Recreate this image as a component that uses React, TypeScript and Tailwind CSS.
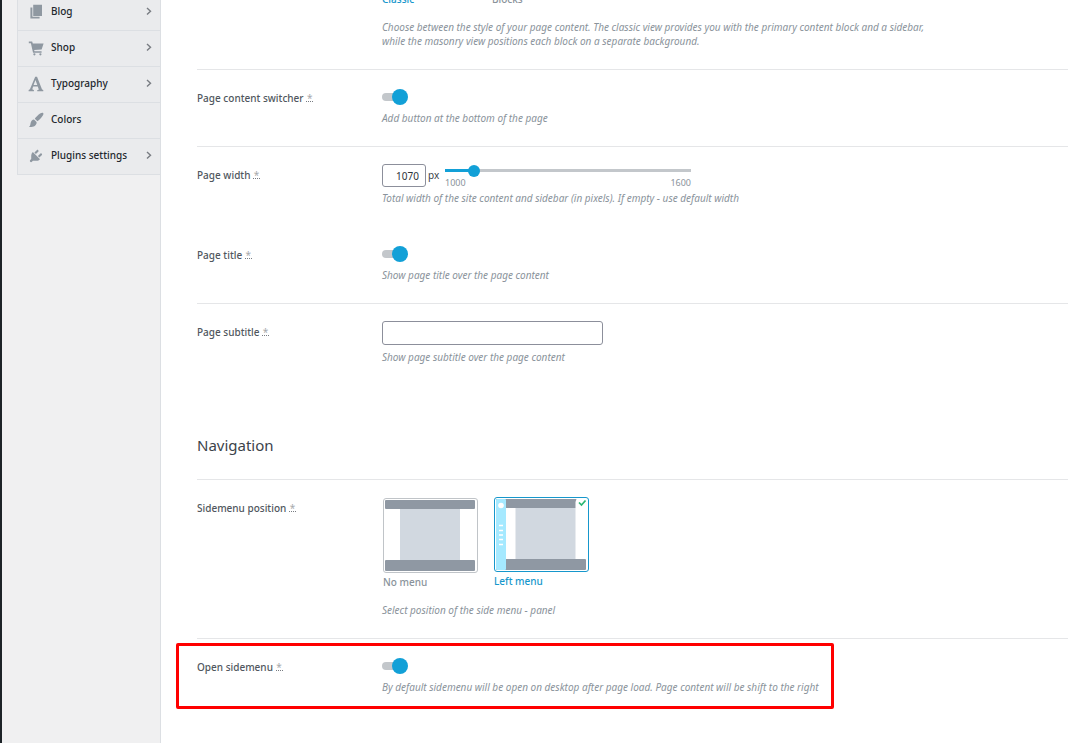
import { useState, type ReactNode } from "react";

const icons = {
  pages: "M6.500 1h11v14h-11zM3 4.500h2.500v11.500h9v2H3z",
  cart: "M1 2h4.200l.8 2.500h13.500l-2.500 7.500-9.300.5.4 1.500H17V16H6.300L3.600 4H1zM8 16.500a1.400 1.400 0 1 1 0 2.800 1.400 1.400 0 0 1 0-2.800zM15.500 16.500a1.400 1.400 0 1 1 0 2.800 1.400 1.400 0 0 1 0-2.800z",
  type: "M9 1h2.300l5.900 15c.3.900.8 1.300 1.900 1.400V19h-7.500v-1.600c1.600 0 2-.3 1.700-1.200l-1.100-3.200H6.500l-.8 2.400c-.5 1.400 0 1.900 1.700 2V19H.8v-1.600c1-.1 1.600-.7 2-1.700zM9.300 5L7 11.400h4.600z",
  brush: "M18.900 1.100c.8.800.2 2.500-.8 3.900-1.500 2.200-4.300 5.300-6.300 6.700L8.500 8.400C9.900 6.400 13 3.500 15.100 2c1.400-1 3.100-1.600 3.800-.9zM7.500 9.400l3.200 3.200c.4 1.600-.4 3.700-2.300 4.800-2 1.200-4.700 1.500-7.300 1.300 1.700-1.100 1.700-2.700 2.100-4.700.5-2.500 2.300-4.500 4.300-4.600z",
  plug: "M13.11 4.36L9.87 7.6 8 5.73l3.24-3.24c.35-.34 1.05-.2 1.56.32.52.51.66 1.21.31 1.55zm-8 1.77l.91-1.12 9.01 9.01-1.19.84c-.71.71-2.63 1.16-3.82 1.16H6.14L4.9 17.26c-.59.59-1.54.59-2.12 0-.59-.58-.59-1.53 0-2.12l1.24-1.24v-3.88c0-1.13.4-3.19 1.09-3.89zm7.26 3.97l3.24-3.24c.34-.35 1.04-.21 1.55.31.52.51.66 1.21.31 1.55l-3.24 3.25z",
};

const menu: { label: string; icon: keyof typeof icons; nested: boolean }[] = [
  { label: "Blog", icon: "pages", nested: true },
  { label: "Shop", icon: "cart", nested: true },
  { label: "Typography", icon: "type", nested: true },
  { label: "Colors", icon: "brush", nested: false },
  { label: "Plugins settings", icon: "plug", nested: true },
];

function Sidebar() {
  return (
    <aside className="w-[161px] shrink-0 border-r border-l-2 border-r-[#dcdfe3] border-l-[#1d2327] bg-[#f0f0f1] pl-[15px]">
      <nav className="-mt-[5px] border-l border-[#dcdfe3]">
        {menu.map((item) => (
          <a
            key={item.label}
            href="#"
            className="flex h-9 items-center border-b border-[#dcdfe3] bg-[#eaebed] pr-1.5 pb-[3px] pl-2.5 text-[#23282d]"
          >
            <svg viewBox="0 0 20 20" className="mt-0.5 mr-[7px] size-4 shrink-0 fill-[#8f98a1]" aria-hidden="true">
              <path d={icons[item.icon]} fillRule="evenodd" />
            </svg>
            <span className="flex-1 font-medium">{item.label}</span>
            {item.nested && (
              <svg viewBox="0 0 10 10" className="size-2.5 fill-none stroke-[#787c82]" strokeWidth="1.4" aria-hidden="true">
                <path d="M3 2l3.500 3.200L3 8.400" />
              </svg>
            )}
          </a>
        ))}
      </nav>
    </aside>
  );
}

function Row({
  label,
  htmlFor,
  note,
  divider = true,
  highlighted = false,
  children,
}: {
  label?: string;
  htmlFor?: string;
  note: ReactNode;
  divider?: boolean;
  highlighted?: boolean;
  children: ReactNode;
}) {
  return (
    <div
      className={`relative grid grid-cols-[185px_1fr] border-b pt-[17px] pb-[21px] ${divider ? "border-[#e5e6e8]" : "border-transparent"}`}
    >
      <div className="pt-1 text-[#50575e]">
        {label && (
          <>
            <label htmlFor={htmlFor} className="font-medium">
              {label}
            </label>{" "}
            <span className="inline-flex h-1.5 w-[7px] justify-center border-b border-dotted border-[#787c82] align-middle leading-[4px] text-[#a7aaad]">
              *
            </span>
          </>
        )}
      </div>
      <div>
        {children}
        <p className="mt-[5px] text-[#8a939b] italic">{note}</p>
      </div>
      {highlighted && (
        <div className="pointer-events-none absolute top-1 -left-[21px] h-[66px] w-[658px] rounded-xs border-3 border-[#ff0000]" />
      )}
    </div>
  );
}

function Switch({ id }: { id: string }) {
  return (
    <input
      id={id}
      type="checkbox"
      defaultChecked
      className="relative mt-px block h-[18px] w-[27px] appearance-none before:absolute before:top-[5px] before:left-0 before:h-2 before:w-6 before:rounded-full before:bg-[#c3c7cb] after:absolute after:top-px after:left-0 after:size-4 after:rounded-full after:bg-[#8f98a1] checked:after:left-[10px] checked:after:bg-[#12a0d7]"
    />
  );
}

function WidthField() {
  const [width, setWidth] = useState(1070);
  const filled = ((width - 1000) / 600) * 100;
  return (
    <div className="flex h-[22px] items-start">
      <input
        id="page-width"
        type="text"
        value={width}
        onChange={(e) => setWidth(Number(e.target.value) || 0)}
        className="h-[23px] w-11 rounded-[3px] border border-[#8c8f9b] bg-white pr-1.5 text-right text-[#2c3338]"
      />
      <span className="mt-1 ml-0.5 w-[17px] text-[#3c434a]">px</span>
      <div className="w-[246px]">
        <div className="relative h-3">
          <div className="absolute inset-x-0 top-[5px] h-[3px] bg-[#c3c7cb]" />
          <div className="absolute top-[5px] left-0 h-[3px] bg-[#12a0d7]" style={{ width: `${filled}%` }} />
          <input
            type="range"
            min={1000}
            max={1600}
            value={width}
            aria-label="Page width in pixels"
            onChange={(e) => setWidth(Number(e.target.value))}
            className="absolute top-0 -left-1.5 h-3.5 w-[260px] appearance-none bg-transparent [&::-webkit-slider-thumb]:size-3 [&::-webkit-slider-thumb]:appearance-none [&::-webkit-slider-thumb]:rounded-full [&::-webkit-slider-thumb]:bg-[#12a0d7]"
          />
        </div>
        <div className="flex justify-between text-[9px] text-[#8a939b]">
          <span>1000</span>
          <span>1600</span>
        </div>
      </div>
    </div>
  );
}

function LayoutDrawing({ side }: { side: boolean }) {
  return (
    <svg viewBox="0 0 91 71" className="block h-[71px] w-[91px]" aria-hidden="true">
      <rect width="90" height="9" rx="1" fill="#8f98a3" />
      <rect y="60" width="90" height="11" rx="1" fill="#8f98a3" />
      {side ? (
        <>
          <rect width="10" height="71" rx="1" fill="#a5e9ff" />
          <rect x="19.500" y="9" width="60" height="51" fill="#d1d8e0" />
          <circle cx="5" cy="6.500" r="2.800" fill="#fff" />
          <path d="M3 26.500h4M3 31.500h4M3 36h4M3 40.500h4M3 45.500h4" stroke="#fff" strokeWidth="1.400" />
          <path d="M80.500 0H91v9H79.500V3z" fill="#fff" />
          <path d="M83 3.500l2.500 2.500L89.500 1.500" fill="none" stroke="#2bb673" strokeWidth="1.700" />
        </>
      ) : (
        <rect x="15" y="9" width="60" height="51" fill="#d1d8e0" />
      )}
    </svg>
  );
}

function PositionPicker() {
  return (
    <div className="flex gap-4 pb-[9px] pl-px">
      {["No menu", "Left menu"].map((name, i) => (
        <label key={name} className={i === 1 ? "text-[#1697cc]" : "pt-px text-[#8a939b]"}>
          <input type="radio" name="sidemenu-position" defaultChecked={i === 1} className="peer sr-only" />
          <span className="block rounded-[3px] border border-[#c0c4c8] p-px peer-checked:border-[#1697cc]">
            <LayoutDrawing side={i === 1} />
          </span>
          <span className="mt-0.5 block font-medium">{name}</span>
        </label>
      ))}
    </div>
  );
}

export default function App() {
  return (
    <div className="flex min-h-screen overflow-hidden bg-white font-['Noto_Sans',sans-serif] text-[10px] leading-[14px]">
      <Sidebar />
      <main className="min-w-0 flex-1 pl-9">
        <div className="-mt-[25px]">
          <Row
            note={
              <>
                Choose between the style of your page content. The classic view provides you with the primary content
                block and a sidebar,
                <br />
                while the masonry view positions each block on a separate background.
              </>
            }
          >
            <div className="flex pb-[9px] font-medium">
              <span className="w-[110px] text-[#1697cc]">Classic</span>
              <span className="text-[#8a939b]">Blocks</span>
            </div>
          </Row>
        </div>
        <Row label="Page content switcher" htmlFor="content-switcher" note="Add button at the bottom of the page">
          <Switch id="content-switcher" />
        </Row>
        <Row
          label="Page width"
          htmlFor="page-width"
          divider={false}
          note="Total width of the site content and sidebar (in pixels). If empty - use default width"
        >
          <WidthField />
        </Row>
        <Row label="Page title" htmlFor="page-title" note="Show page title over the page content">
          <Switch id="page-title" />
        </Row>
        <Row label="Page subtitle" htmlFor="page-subtitle" divider={false} note="Show page subtitle over the page content">
          <input id="page-subtitle" type="text" className="block h-6 w-[221px] rounded-[3px] border border-[#8c8f9b] bg-white px-2" />
        </Row>
        <h2 className="border-b border-[#e5e6e8] pt-[49px] pb-6 text-[15px] leading-5 font-normal text-[#3c434a]">Navigation</h2>
        <Row label="Sidemenu position" note="Select position of the side menu - panel">
          <PositionPicker />
        </Row>
        <Row
          label="Open sidemenu"
          htmlFor="open-sidemenu"
          divider={false}
          highlighted
          note="By default sidemenu will be open on desktop after page load. Page content will be shift to the right"
        >
          <Switch id="open-sidemenu" />
        </Row>
      </main>
    </div>
  );
}
